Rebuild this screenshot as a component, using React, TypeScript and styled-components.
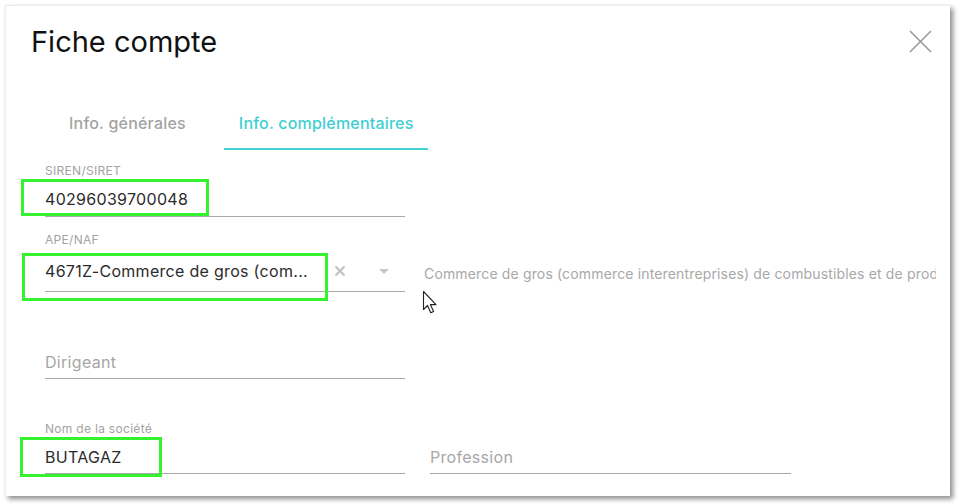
import React from 'react';
import styled, { createGlobalStyle } from 'styled-components';

const GlobalStyle = createGlobalStyle`
    html, body {
        margin: 0;
        padding: 0;
        background-color: #ffffff;
        font-family: Inter, "Noto Sans", "Liberation Sans", sans-serif;
    }
`;

const Page = styled.div`
    width: 959px;
    height: 504px;
    padding: 5px 0 0 5px;
    box-sizing: border-box;
`;

const Dialog = styled.div`
    position: relative;
    width: 945px;
    height: 491px;
    box-sizing: border-box;
    background-color: #ffffff;
    border-top: 1px solid #ececec;
    border-left: 1px solid #ececec;
    box-shadow: 3px 3px 5px rgba(0, 0, 0, 0.45);
    overflow: hidden;
`;

const Header = styled.div`
    display: flex;
    justify-content: space-between;
    align-items: flex-start;
    padding: 18px 18px 0 25px;
`;

const Title = styled.h2`
    margin: 0;
    font-size: 29px;
    line-height: 36px;
    font-weight: 400;
    color: #111111;
`;

const CloseButton = styled.button`
    display: flex;
    margin-top: 6px;
    padding: 0;
    border-style: none;
    background: none;
    cursor: pointer;
`;

const Tabs = styled.div`
    display: flex;
    gap: 23px;
    margin: 42px 0 0 48px;
`;

const Tab = styled.div<{ $active?: boolean }>`
    height: 48px;
    box-sizing: border-box;
    padding: 0 15px 4px;
    display: flex;
    align-items: center;
    font-size: 16px;
    font-weight: 500;
    letter-spacing: 0.2px;
    color: ${(p) => (p.$active ? '#3fcfd2' : '#a3a3a3')};
    border-bottom: 2px solid ${(p) => (p.$active ? '#3fd3d6' : 'transparent')};
`;

const Form = styled.div`
    display: flex;
    flex-direction: column;
    padding: 14px 14px 0 39px;
`;

const Row = styled.div<{ $gap: number }>`
    display: flex;
    align-items: flex-start;
    margin-top: ${(p) => p.$gap}px;
`;

const FieldWrap = styled.div<{ $width: number; $offset?: number }>`
    width: ${(p) => p.$width}px;
    margin-left: ${(p) => p.$offset || 0}px;
    flex-shrink: 0;
`;

const Label = styled.div<{ $hidden?: boolean }>`
    height: 14px;
    font-size: 12px;
    line-height: 14px;
    letter-spacing: 0.3px;
    color: #a3a3a3;
    visibility: ${(p) => (p.$hidden ? 'hidden' : 'visible')};
`;

const InputArea = styled.div<{ $top: number; $bottom: number }>`
    position: relative;
    display: flex;
    align-items: center;
    padding: ${(p) => p.$top}px 0 ${(p) => p.$bottom}px;
    border-bottom: 1px solid #a8a8a8;
`;

const Value = styled.span<{ $placeholder?: boolean }>`
    flex: 1;
    font-size: 16px;
    line-height: 20px;
    letter-spacing: 0.3px;
    color: ${(p) => (p.$placeholder ? '#a6a6a6' : '#2b2b2b')};
    white-space: nowrap;
    overflow: hidden;
`;

const SelectIcons = styled.div`
    display: flex;
    align-items: center;
    gap: 33px;
    margin-right: 16px;
`;

const Description = styled.div`
    flex: 1;
    min-width: 0;
    margin: 31px 0 0 19px;
    font-size: 14px;
    line-height: 20px;
    letter-spacing: 0.15px;
    color: #a8a8a8;
    white-space: nowrap;
    overflow: hidden;
`;

const Highlight = styled.div<{ $left: number; $top: number; $w: number; $h: number }>`
    position: absolute;
    left: ${(p) => p.$left}px;
    top: ${(p) => p.$top}px;
    width: ${(p) => p.$w}px;
    height: ${(p) => p.$h}px;
    box-sizing: border-box;
    border: 3px solid #35f22e;
    pointer-events: none;
`;

const Cursor = styled.svg`
    position: absolute;
    left: 416px;
    top: 284px;
`;

interface FieldProps {
    label: string;
    value: string;
    placeholder?: boolean;
    top: number;
    bottom: number;
    width?: number;
    offset?: number;
    children?: React.ReactNode;
}

function Field({ label, value, placeholder, top, bottom, width = 360, offset, children }: FieldProps) {
    return (
        <FieldWrap $width={width} $offset={offset}>
            <Label $hidden={placeholder}>{label}</Label>
            <InputArea $top={top} $bottom={bottom}>
                <Value $placeholder={placeholder}>{value}</Value>
                {children}
            </InputArea>
        </FieldWrap>
    );
}

export default function App() {
    return (
        <>
            <GlobalStyle />
            <Page>
                <Dialog>
                    <Header>
                        <Title>Fiche compte</Title>
                        <CloseButton aria-label="Fermer">
                            <svg width="23" height="23" viewBox="0 0 23 23">
                                <path d="M1 1 L22 22 M22 1 L1 22" stroke="#9a9a9a" strokeWidth="1.6" fill="none" />
                            </svg>
                        </CloseButton>
                    </Header>
                    <Tabs>
                        <Tab>Info. générales</Tab>
                        <Tab $active>Info. complémentaires</Tab>
                    </Tabs>
                    <Form>
                        <Row $gap={0}>
                            <Field label="SIREN/SIRET" value="40296039700048" top={11} bottom={7}>
                                <Highlight $left={-24} $top={1} $w={188} $h={37} />
                            </Field>
                        </Row>
                        <Row $gap={16}>
                            <Field label="APE/NAF" value="4671Z-Commerce de gros (com..." top={14} bottom={10}>
                                <SelectIcons>
                                    <svg width="12" height="12" viewBox="0 0 12 12">
                                        <path d="M1.5 1.5 L10.5 10.5 M10.5 1.5 L1.5 10.5" stroke="#c2c2c2" strokeWidth="2.2" fill="none" />
                                    </svg>
                                    <svg width="10" height="5" viewBox="0 0 10 5">
                                        <path d="M0 0 L10 0 L5 5 Z" fill="#c8c8c8" />
                                    </svg>
                                </SelectIcons>
                                <Highlight $left={-23} $top={6} $w={306} $h={48} />
                            </Field>
                            <Description>
                                Commerce de gros (commerce interentreprises) de combustibles et de produits annexes
                            </Description>
                        </Row>
                        <Row $gap={35}>
                            <Field label="Dirigeant" value="Dirigeant" placeholder top={11} bottom={6} />
                        </Row>
                        <Row $gap={43}>
                            <Field label="Nom de la société" value="BUTAGAZ" top={11} bottom={6}>
                                <Highlight $left={-25} $top={1} $w={142} $h={40} />
                            </Field>
                            <Field label="Profession" value="Profession" placeholder top={11} bottom={6} width={361} offset={25} />
                        </Row>
                    </Form>
                    <Cursor width="18" height="26" viewBox="0 0 18 26">
                        <path
                            d="M1.5 1.5 L1.5 19.5 L5.5 15.5 L8.8 22.8 L11.6 21.6 L8.4 14.6 L14 14.6 Z"
                            fill="#ffffff"
                            stroke="#222222"
                            strokeWidth="1.1"
                            strokeLinejoin="round"
                        />
                    </Cursor>
                </Dialog>
            </Page>
        </>
    );
}
